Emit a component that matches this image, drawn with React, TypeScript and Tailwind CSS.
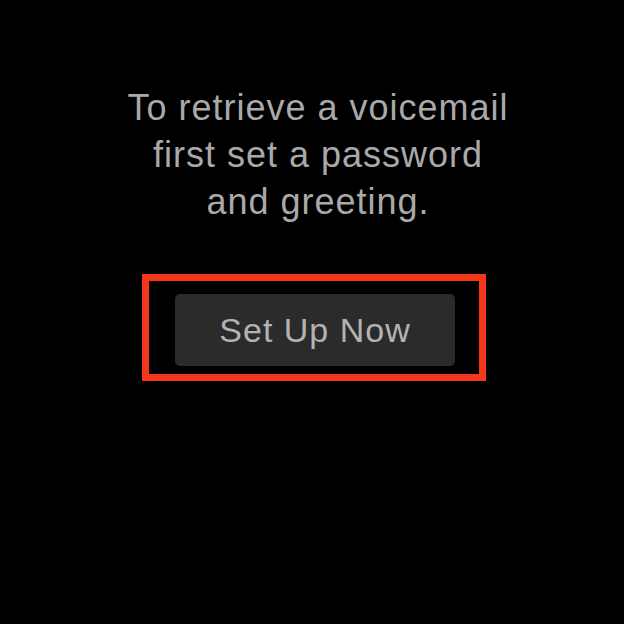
export default function App() {
  return (
    <div
      className="w-[624px] h-[624px] bg-black flex flex-col items-center"
      style={{ fontFamily: '"Liberation Sans", Arial, sans-serif' }}
    >
      <p className="mt-[84px] pl-[12px] text-center text-[36px] leading-[47px] tracking-[1px] text-[#a9a9a9]">
        To retrieve a voicemail
        <br />
        first set a password
        <br />
        and greeting.
      </p>
      <div className="mt-[49px] ml-[4px] border-[7px] border-[#f4361a] pl-[26px] pr-[24px] pt-[13px] pb-[8px]">
        <div className="w-[280px] h-[72px] rounded-[5px] bg-[#2b2b2b] flex items-center justify-center text-[34px] leading-[72px] tracking-[1px] text-[#b3b3b3]">
          Set Up Now
        </div>
      </div>
    </div>
  );
}
